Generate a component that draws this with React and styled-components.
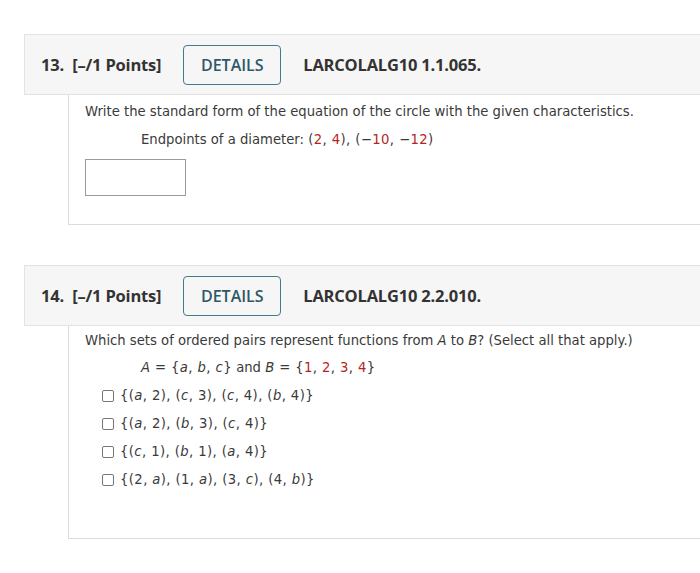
import React from "react";
import styled, { createGlobalStyle } from "styled-components";

const Global = createGlobalStyle`
  html, body { margin: 0; padding: 0; background: #fff; overflow: hidden; }
  body { width: 700px; height: 573px; }
`;

const Page = styled.div`
  padding: 34px 0 0 24px;
  display: flex;
  flex-direction: column;
  gap: 40px;
`;

const Question = styled.section`
  margin-right: -30px;
  display: flex;
  flex-direction: column;
`;

const Header = styled.header`
  box-sizing: border-box;
  height: 61px;
  background: #f6f6f6;
  border: 1px solid #e3e3e3;
  display: flex;
  align-items: center;
  padding-left: 16px;
  gap: 22px;
  font-family: "Open Sans", "Liberation Sans", sans-serif;
  color: #333;
`;

const Title = styled.span`
  font-size: 16.5px;
  font-weight: 700;
  letter-spacing: -0.2px;
`;

const Details = styled.button`
  box-sizing: border-box;
  width: 98px;
  height: 40px;
  background: transparent;
  border: 1.5px solid #3f7c8e;
  border-radius: 4px;
  color: #2f5868;
  font-family: "Open Sans", "Liberation Sans", sans-serif;
  font-size: 16px;
  font-weight: 600;
  padding: 0;
`;

const Ref = styled.span`
  font-size: 16.5px;
  font-weight: 700;
  letter-spacing: -0.2px;
`;

const Body = styled.div`
  box-sizing: border-box;
  margin-left: 44px;
  height: ${(p) => p.$h}px;
  border-left: 1px solid #dcdcdc;
  border-bottom: 1px solid #dcdcdc;
  padding: ${(p) => p.$pt}px 0 0 16px;
  font-family: "DejaVu Sans", Verdana, sans-serif;
  font-size: 13.2px;
  color: #3a3a3a;
  display: flex;
  flex-direction: column;
  align-items: flex-start;
`;

const Line = styled.div`
  line-height: 16px;
  margin-left: ${(p) => p.$indent || 0}px;
  margin-top: ${(p) => p.$mt || 0}px;
  white-space: nowrap;
`;

const Math = styled.span`
  letter-spacing: 0.4px;
`;

const Red = styled.span`
  color: #b3261e;
`;

const I = styled.i`
  font-style: italic;
`;

const AnswerBox = styled.div`
  box-sizing: border-box;
  width: 101px;
  height: 37px;
  margin-top: 11px;
  border: 1px solid #9a9a9a;
  background: #fff;
`;

const Options = styled.div`
  margin: 12px 0 0 17px;
  display: flex;
  flex-direction: column;
  gap: 12px;
`;

const Option = styled.label`
  display: flex;
  align-items: center;
  gap: 6px;
  line-height: 16px;
  white-space: nowrap;
`;

const Box = styled.span`
  box-sizing: border-box;
  width: 12px;
  height: 12px;
  border: 1px solid #777;
  border-radius: 2px;
  background: #fff;
`;

const options = [
  <>{"{("}<I>a</I>, 2), (<I>c</I>, 3), (<I>c</I>, 4), (<I>b</I>, 4){"}"}</>,
  <>{"{("}<I>a</I>, 2), (<I>b</I>, 3), (<I>c</I>, 4){"}"}</>,
  <>{"{("}<I>c</I>, 1), (<I>b</I>, 1), (<I>a</I>, 4){"}"}</>,
  <>{"{(2, "}<I>a</I>), (1, <I>a</I>), (3, <I>c</I>), (4, <I>b</I>){"}"}</>,
];

export default function App() {
  return (
    <>
      <Global />
      <Page>
        <Question>
          <Header>
            <Title>13.&nbsp; [–/1 Points]</Title>
            <Details>DETAILS</Details>
            <Ref>LARCOLALG10 1.1.065.</Ref>
          </Header>
          <Body $h={130} $pt={9}>
            <Line>Write the standard form of the equation of the circle with the given characteristics.</Line>
            <Line $indent={56} $mt={12}>
              Endpoints of a diameter:{" "}
              <Math>
                (<Red>2</Red>, <Red>4</Red>), (−<Red>10</Red>, −<Red>12</Red>)
              </Math>
            </Line>
            <AnswerBox />
          </Body>
        </Question>
        <Question>
          <Header>
            <Title>14.&nbsp; [–/1 Points]</Title>
            <Details>DETAILS</Details>
            <Ref>LARCOLALG10 2.2.010.</Ref>
          </Header>
          <Body $h={213} $pt={7}>
            <Line>
              Which sets of ordered pairs represent functions from <I>A</I> to <I>B</I>? (Select all that apply.)
            </Line>
            <Line $indent={56} $mt={11}>
              <Math>
                <I>A</I> = {"{"}<I>a</I>, <I>b</I>, <I>c</I>{"}"}
              </Math>{" "}
              and{" "}
              <Math>
                <I>B</I> = {"{"}<Red>1</Red>, <Red>2</Red>, <Red>3</Red>, <Red>4</Red>{"}"}
              </Math>
            </Line>
            <Options>
              {options.map((o, i) => (
                <Option key={i}>
                  <Box />
                  <Math>{o}</Math>
                </Option>
              ))}
            </Options>
          </Body>
        </Question>
      </Page>
    </>
  );
}
